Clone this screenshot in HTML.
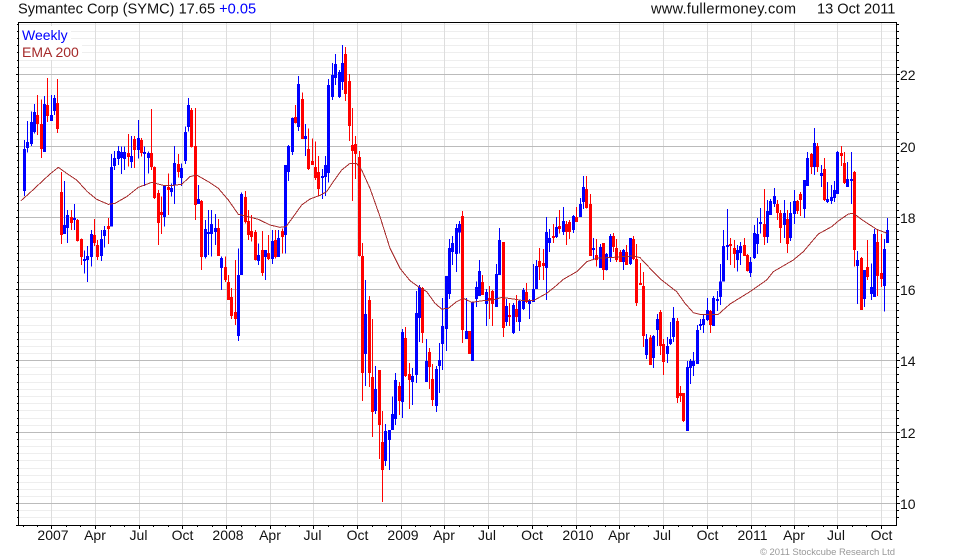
<!DOCTYPE html>
<html><head><meta charset="utf-8"><title>SYMC</title>
<style>html,body{margin:0;padding:0;background:#fff;width:980px;height:560px;overflow:hidden}svg{display:block}text{font-family:"Liberation Sans",Arial,sans-serif;font-size:14px;fill:#111}</style>
</head><body>
<svg width="980" height="560" viewBox="0 0 980 560" xmlns="http://www.w3.org/2000/svg">
<rect width="980" height="560" fill="#fff"/>
<g shape-rendering="crispEdges" fill="none" stroke-width="1">
<path stroke="#eee" d="M19 24.5H896M19 31.5H896M19 38.5H896M19 45.5H896M19 52.5H896M19 60.5H896M19 67.5H896M19 81.5H896M19 88.5H896M19 96.5H896M19 103.5H896M19 110.5H896M19 117.5H896M19 124.5H896M19 132.5H896M19 139.5H896M19 153.5H896M19 160.5H896M19 167.5H896M19 174.5H896M19 182.5H896M19 189.5H896M19 196.5H896M19 203.5H896M19 210.5H896M19 224.5H896M19 231.5H896M19 239.5H896M19 246.5H896M19 253.5H896M19 260.5H896M19 267.5H896M19 275.5H896M19 282.5H896M19 296.5H896M19 303.5H896M19 310.5H896M19 317.5H896M19 325.5H896M19 332.5H896M19 339.5H896M19 346.5H896M19 353.5H896M19 367.5H896M19 374.5H896M19 382.5H896M19 389.5H896M19 396.5H896M19 403.5H896M19 410.5H896M19 418.5H896M19 425.5H896M19 439.5H896M19 446.5H896M19 453.5H896M19 460.5H896M19 468.5H896M19 475.5H896M19 482.5H896M19 489.5H896M19 496.5H896M19 510.5H896M19 517.5H896"/>
<path stroke="#ddd" d="M51.5 23V525M95.5 23V525M139.5 23V525M182.5 23V525M226.5 23V525M270.5 23V525M313.5 23V525M357.5 23V525M401.5 23V525M444.5 23V525M488.5 23V525M532.5 23V525M576.5 23V525M619.5 23V525M663.5 23V525M707.5 23V525M751.5 23V525M794.5 23V525M837.5 23V525M881.5 23V525"/>
<path stroke="#bbb" d="M19 74.5H896M19 146.5H896M19 217.5H896M19 289.5H896M19 360.5H896M19 432.5H896M19 503.5H896"/>
<path stroke="#000" d="M18 22.5H897M18.5 22V526M896.5 22V526M16 525.5H897"/>
<path stroke="#000" d="M16 74.5H18M16 146.5H18M16 217.5H18M16 289.5H18M16 360.5H18M16 432.5H18M16 503.5H18M897 74.5H900M897 146.5H900M897 217.5H900M897 289.5H900M897 360.5H900M897 432.5H900M897 503.5H900"/>
<path stroke="#000" d="M17 24.5H18M17 31.5H18M17 38.5H18M17 45.5H18M17 52.5H18M17 60.5H18M17 67.5H18M17 81.5H18M17 88.5H18M17 96.5H18M17 103.5H18M17 110.5H18M17 117.5H18M17 124.5H18M17 132.5H18M17 139.5H18M17 153.5H18M17 160.5H18M17 167.5H18M17 174.5H18M17 182.5H18M17 189.5H18M17 196.5H18M17 203.5H18M17 210.5H18M17 224.5H18M17 231.5H18M17 239.5H18M17 246.5H18M17 253.5H18M17 260.5H18M17 267.5H18M17 275.5H18M17 282.5H18M17 296.5H18M17 303.5H18M17 310.5H18M17 317.5H18M17 325.5H18M17 332.5H18M17 339.5H18M17 346.5H18M17 353.5H18M17 367.5H18M17 374.5H18M17 382.5H18M17 389.5H18M17 396.5H18M17 403.5H18M17 410.5H18M17 418.5H18M17 425.5H18M17 439.5H18M17 446.5H18M17 453.5H18M17 460.5H18M17 468.5H18M17 475.5H18M17 482.5H18M17 489.5H18M17 496.5H18M17 510.5H18M17 517.5H18M897 24.5H899M897 31.5H899M897 38.5H899M897 45.5H899M897 52.5H899M897 60.5H899M897 67.5H899M897 81.5H899M897 88.5H899M897 96.5H899M897 103.5H899M897 110.5H899M897 117.5H899M897 124.5H899M897 132.5H899M897 139.5H899M897 153.5H899M897 160.5H899M897 167.5H899M897 174.5H899M897 182.5H899M897 189.5H899M897 196.5H899M897 203.5H899M897 210.5H899M897 224.5H899M897 231.5H899M897 239.5H899M897 246.5H899M897 253.5H899M897 260.5H899M897 267.5H899M897 275.5H899M897 282.5H899M897 296.5H899M897 303.5H899M897 310.5H899M897 317.5H899M897 325.5H899M897 332.5H899M897 339.5H899M897 346.5H899M897 353.5H899M897 367.5H899M897 374.5H899M897 382.5H899M897 389.5H899M897 396.5H899M897 403.5H899M897 410.5H899M897 418.5H899M897 425.5H899M897 439.5H899M897 446.5H899M897 453.5H899M897 460.5H899M897 468.5H899M897 475.5H899M897 482.5H899M897 489.5H899M897 496.5H899M897 510.5H899M897 517.5H899"/>
<path stroke="#000" d="M51.5 526V529M95.5 526V529M139.5 526V529M182.5 526V529M226.5 526V529M270.5 526V529M313.5 526V529M357.5 526V529M401.5 526V529M444.5 526V529M488.5 526V529M532.5 526V529M576.5 526V529M619.5 526V529M663.5 526V529M707.5 526V529M751.5 526V529M794.5 526V529M837.5 526V529M881.5 526V529M23.5 526V527M37.5 526V527M66.5 526V527M80.5 526V527M110.5 526V527M124.5 526V527M153.5 526V527M168.5 526V527M197.5 526V527M212.5 526V527M241.5 526V527M255.5 526V527M285.5 526V527M299.5 526V527M328.5 526V527M343.5 526V527M372.5 526V527M386.5 526V527M415.5 526V527M430.5 526V527M459.5 526V527M473.5 526V527M503.5 526V527M517.5 526V527M547.5 526V527M561.5 526V527M590.5 526V527M605.5 526V527M634.5 526V527M648.5 526V527M678.5 526V527M692.5 526V527M722.5 526V527M736.5 526V527M765.5 526V527M780.5 526V527M808.5 526V527M823.5 526V527M852.5 526V527M866.5 526V527"/>
</g>
<rect x="20" y="26" width="51" height="17" fill="#fff"/>
<rect x="20" y="43" width="62" height="17" fill="#fff"/>
<g transform="scale(.333333)" fill="none" shape-rendering="crispEdges">
<g transform="translate(.5,0)">
<path stroke="#00f" stroke-width="3" d="M73 420V588M82 363V458M94 335V438M103 312V400M133 288V456M154 285V362M163 285V345M193 543V700M202 630V729M223 612V690M253 752V820M262 738V846M274 690V800M304 690V783M313 678V743M334 462V680M343 453V510M355 438V495M364 440V522M373 440V510M394 408V504M415 360V475M433 440V558M445 455V520M493 555V680M514 550V590M523 438V612M544 490V558M556 380V492M565 294V395M595 555V612M616 660V775M625 630V765M634 630V770M646 642V735M664 770V870M715 745V1023M724 578V825M775 730V795M796 750V840M817 690V792M835 690V770M856 495V760M865 435V543M877 352V465M895 228V393M916 372V468"/>
<path stroke="#00f" stroke-width="9" d="M73 447V573M82 426V444M94 366V432M103 336V396M133 312V456M154 345V363M163 294V333M193 675V702M202 645V684M223 654V660M253 777V783M262 768V780M274 702V771M304 717V768M313 690V708M334 501V680M343 474V498M355 453V477M364 456V474M373 456V477M394 468V486M415 414V450M433 456V462M445 459V474M493 555V651M514 564V576M523 489V555M544 504V534M556 396V483M565 315V381M595 597V612M616 687V771M625 696V702M634 672V702M646 684V696M664 774V804M715 825V1008M724 582V825M775 765V783M796 750V771M817 723V777M835 714V771M856 495V705M865 438V516M877 354V456M895 252V381M916 408V417"/>
<path stroke="#f00" stroke-width="3" d="M112 285V405M124 298V474M142 234V366M172 237V399M184 516V732M214 630V690M232 657V725M244 715V795M283 657V738M292 720V780M325 654V732M385 402V500M403 408V504M424 414V470M454 327V510M463 500V597M475 570V735M484 590V702M505 520V645M535 462V532M574 324V443M586 324V660M604 600V810M655 657V765M676 770V846M685 825V900M694 864V957M706 780V975M736 573V670M745 630V720M754 645V725M766 690V782M787 693V828M805 705V780M826 690V775M847 685V760M886 315V370M907 278V417M925 385V510M937 415V490M946 425V540M955 468V590"/>
<path stroke="#f00" stroke-width="9" d="M112 345V372M124 372V447M142 315V348M172 309V387M184 576V705M214 651V669M232 660V723M244 717V771M283 705V729M292 735V771M325 678V687M385 459V471M403 417V450M424 420V459M454 459V501M463 501V594M475 579V669M484 636V645M505 561V570M535 492V516M574 330V441M586 438V615M604 603V771M655 684V768M676 801V840M685 846V900M694 891V948M706 936V957M736 591V666M745 663V705M754 693V711M766 696V780M787 750V819M805 759V777M826 720V771M847 693V711M886 351V369M907 297V417M925 447V507M937 483V495M946 501V534M955 516V567"/>
</g>
<g transform="translate(960.5,0)">
<path stroke="#00f" stroke-width="3" d="M7 507V597M16 468V588M25 237V548M37 189V300M46 162V255M58 210V294M67 135V270M136 840V1158M166 1098V1242M196 1272V1398M208 1290V1410M217 1190V1290M226 1119V1275M247 987V1254M277 1104V1215M289 873V1149M298 855V1026M319 1017V1146M349 1098V1236M358 1029V1179M367 894V1110M379 828V1053M388 717V897M397 708V795M409 672V816M418 663V760M439 894V1017M457 906V1083M469 845V921M478 780V888M499 867V978M529 792V921M538 684V825M559 897V978M580 909V1002M598 900V993M610 864V930M628 897V957M640 792V906M649 780V846M679 651V900M688 687V756M709 651V714M730 621V705M760 645V699M781 594V651M790 528V627M820 714V777M841 732V804M859 759V812M871 702V786M910 747V810M931 714V795M979 1002V1077"/>
<path stroke="#00f" stroke-width="9" d="M7 528V534M16 495V531M25 255V519M37 225V291M46 192V234M58 216V291M67 189V246M136 942V1062M166 1167V1233M196 1293V1383M208 1290V1320M217 1242V1290M226 1140V1257M247 996V1206M277 1128V1146M289 939V1125M298 861V954M319 1083V1146M349 1107V1218M358 1080V1098M367 978V1032M379 828V987M388 744V882M397 729V756M409 684V762M418 672V698M439 993V1017M457 906V1083M469 861V897M478 813V888M499 876V912M529 822V921M538 720V825M559 918V966M580 915V999M598 903V966M610 870V927M628 903V912M640 867V906M649 798V867M679 696V804M688 714V729M709 681V711M730 663V696M760 648V690M781 612V651M790 561V606M820 744V750M841 741V804M859 762V810M871 708V774M910 750V786M931 714V792M979 1017V1065"/>
<path stroke="#f00" stroke-width="3" d="M76 141V303M88 222V423M97 324V603M106 408V537M118 453V770M127 729V1203M148 888V1161M157 957V1311M178 1110V1377M187 1233V1506M238 1146V1245M256 981V1131M268 1089V1227M307 861V1029M328 1044V1167M337 1092V1218M427 633V1029M448 993V1062M487 825V885M508 858V957M517 870V978M550 726V1011M568 909V978M589 885V966M619 849V909M658 744V840M670 747V840M700 672V729M718 630V700M739 663V735M748 660V717M769 621V666M799 528V625M811 582V768M829 717V800M850 729V840M880 699V756M889 717V786M901 750V786M919 735V795M940 708V780M949 732V918M961 789V855M970 816V1041"/>
<path stroke="#f00" stroke-width="9" d="M76 162V282M88 243V378M97 435V453M106 432V462M118 471V768M127 768V1119M148 900V1119M157 1131V1236M178 1110V1275M187 1326V1410M238 1158V1203M256 1014V1128M268 1122V1140M307 864V999M328 1056V1101M337 1137V1200M427 648V990M448 993V1062M487 846V885M508 894V900M517 873V912M550 726V984M568 945V951M589 927V951M619 876V906M658 783V801M670 789V798M700 708V714M718 678V687M739 672V696M748 666V696M769 651V666M799 567V624M811 612V768M829 765V780M850 729V810M880 708V741M889 744V780M901 756V786M919 756V795M940 717V777M949 777V909M961 849V855M970 858V1008"/>
</g>
<g transform="translate(1950.5,0)">
<path stroke="#00f" stroke-width="3" d="M10 1005V1104M22 942V1038M52 1011V1089M61 966V1035M70 921V1026M112 1083V1293M121 1077V1152M130 1056V1128M142 975V1092M151 957V990M160 945V999M172 894V963M190 888V978M202 873V933M211 792V915M220 690V845M232 627V780M262 735V815M271 726V795M301 771V831M313 675V777M322 654V762M331 624V700M352 600V729M361 597V645M373 564V621M403 600V714M421 606V723M433 570V672M463 540V654M472 456V558M493 384V525M514 495V561M532 546V609M544 555V612M553 543V606M562 453V582M592 486V561M604 456V612M622 753V912M643 810V921M664 790V900M673 687V891M703 717V935M712 654V729"/>
<path stroke="#00f" stroke-width="9" d="M10 1008V1074M22 957V990M52 1038V1062M61 1017V1032M70 954V1011M112 1101V1293M121 1083V1104M130 1083V1098M142 990V1092M151 972V978M160 957V975M172 930V960M190 894V978M202 897V903M211 845V891M220 738V845M232 735V741M262 750V780M271 738V759M301 786V819M313 699V774M322 702V732M331 666V672M352 633V711M361 603V645M373 588V612M403 639V675M421 639V714M433 603V642M463 540V627M472 474V558M493 429V501M514 519V528M532 597V606M544 591V603M553 570V594M562 456V582M592 537V561M604 537V543M622 780V798M643 810V897M664 861V882M673 702V891M703 747V858M712 690V729"/>
<path stroke="#f00" stroke-width="3" d="M1 1005V1095M31 930V1065M40 1017V1125M82 954V1209M91 1158V1206M100 1179V1266M181 930V999M241 714V795M253 720V804M283 714V768M292 762V815M343 567V735M382 600V660M391 630V729M412 630V759M442 600V642M451 576V648M484 459V522M502 429V516M523 474V603M574 438V498M583 456V552M613 513V800M634 771V930M652 720V840M682 687V888M694 702V861"/>
<path stroke="#f00" stroke-width="9" d="M1 1012V1095M31 936V1038M40 1032V1086M82 963V1194M91 1179V1188M100 1179V1263M181 933V975M241 732V738M253 744V762M283 735V768M292 765V813M343 672V711M382 612V639M391 639V684M412 657V732M442 603V633M451 582V600M484 462V501M502 438V501M523 507V600M574 459V468M583 489V549M613 516V750M634 774V930M652 801V831M682 726V828M694 819V837"/>
</g>
<polyline stroke="#a52a2a" stroke-width="3" fill="none" points="63,602 90,578 120,550 150,522 175,502 200,520 230,540 262,575 290,598 325,613 345,610 380,590 415,562 455,547 490,556 520,556 545,553 570,530 590,525 625,545 655,565 685,600 715,643 745,650 775,658 810,675 840,682 858,680 880,650 905,615 930,597 960,586 980,575 1000,545 1025,510 1050,490 1070,491 1085,510 1110,565 1140,650 1170,745 1200,805 1230,842 1255,860 1280,875 1305,910 1325,927 1345,925 1370,905 1390,895 1415,907 1450,902 1480,900 1505,892 1540,897 1570,902 1600,902 1640,880 1665,860 1690,838 1730,815 1760,785 1790,775 1840,772 1900,768 1920,773 1950,805 1985,840 2030,875 2055,910 2080,938 2100,943 2155,943 2190,912 2250,875 2300,840 2320,815 2380,780 2410,755 2455,702 2495,680 2515,663 2545,642 2560,640 2590,662 2630,688 2662,700"/>
</g>
<text x="18" y="13.5" style="font-size:14.6px">Symantec Corp (SYMC) 17.65 <tspan style="fill:#00f">+0.05</tspan></text>
<text x="651" y="13.5" textLength="145" lengthAdjust="spacing" style="font-size:14.6px">www.fullermoney.com</text>
<text x="817" y="13.5" style="font-size:14.6px">13 Oct 2011</text>
<text x="22" y="40" style="fill:#00f">Weekly</text>
<text x="22" y="57" style="fill:#a52a2a">EMA 200</text>
<text x="900" y="80">22</text>
<text x="900" y="152">20</text>
<text x="900" y="223">18</text>
<text x="900" y="295">16</text>
<text x="900" y="366">14</text>
<text x="900" y="438">12</text>
<text x="900" y="509">10</text>
<g text-anchor="middle">
<text x="53" y="540">2007</text><text x="95" y="540">Apr</text><text x="138.5" y="540">Jul</text><text x="182.5" y="540">Oct</text><text x="228" y="540">2008</text><text x="270" y="540">Apr</text><text x="312.5" y="540">Jul</text><text x="357.5" y="540">Oct</text><text x="403" y="540">2009</text><text x="444" y="540">Apr</text><text x="487" y="540">Jul</text><text x="532" y="540">Oct</text><text x="578" y="540">2010</text><text x="619" y="540">Apr</text><text x="662" y="540">Jul</text><text x="707.5" y="540">Oct</text><text x="752.5" y="540">2011</text><text x="794" y="540">Apr</text><text x="836" y="540">Jul</text><text x="881.5" y="540">Oct</text>
</g>
<text x="760" y="555" textLength="135" lengthAdjust="spacing" style="font-size:9.5px;fill:#999">© 2011 Stockcube Research Ltd</text>
</svg>
</body></html>
